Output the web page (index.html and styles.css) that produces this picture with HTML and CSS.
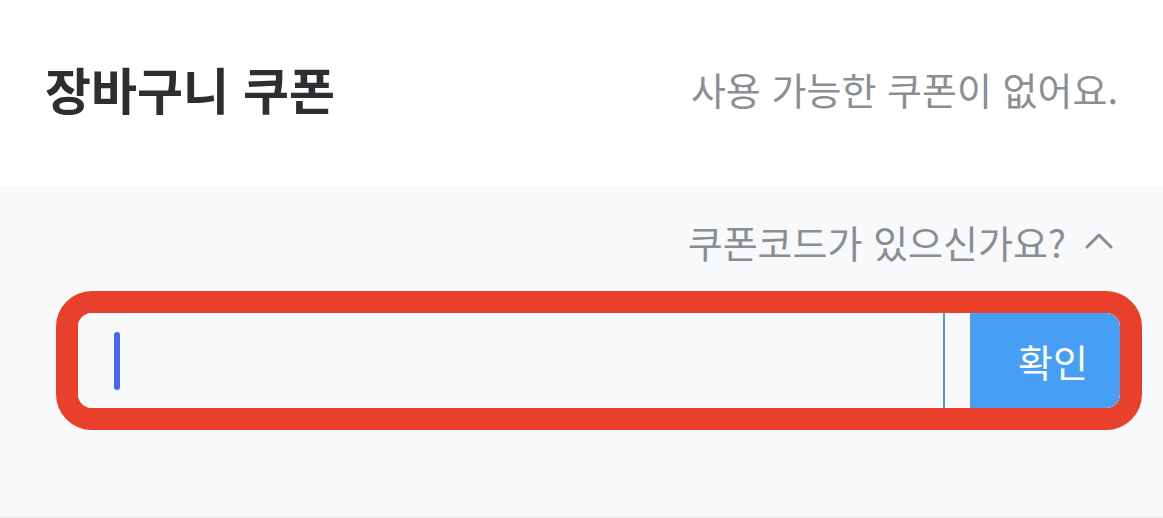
FILE: index.html
```html
<!DOCTYPE html>
<html lang="ko">
<head>
    <meta charset="UTF-8">
    <meta name="viewport" content="width=device-width, initial-scale=1.0">
    <title>장바구니 쿠폰</title>
    <link rel="stylesheet" href="styles.css">
</head>
<body>
    <div class="coupon-header">
        <h2 class="coupon-title">장바구니 쿠폰</h2>
        <span class="coupon-empty">사용 가능한 쿠폰이 없어요.</span>
    </div>

    <div class="coupon-code">
        <div class="code-toggle">
            <span>쿠폰코드가 있으신가요?</span>
            <svg class="chevron" width="28" height="17" viewBox="0 0 28 17">
                <path d="M2 15 L14 3 L26 15" fill="none" stroke="#8a8d92" stroke-width="3" stroke-linecap="round" stroke-linejoin="round"/>
            </svg>
        </div>

        <!-- 강조 표시 -->
        <div class="highlight">
            <div class="code-form">
                <div class="code-input">
                    <span class="caret"></span>
                </div>
                <div class="code-spacer"></div>
                <button class="code-submit">확인</button>
            </div>
        </div>
    </div>
</body>
</html>
```

FILE: styles.css
```css
* {
    box-sizing: border-box;
    font-family: "Noto Sans CJK KR", "Noto Sans", sans-serif;
}

body {
    margin: 0;
    background-color: #ffffff;
}

.coupon-header {
    height: 186px;
    padding: 0 45px 10px;
    display: flex;
    justify-content: space-between;
    align-items: center;
}

.coupon-title {
    margin: 0;
    font-size: 50px;
    font-weight: 700;
    color: #2c2e31;
}

.coupon-empty {
    font-size: 38px;
    color: #8b8e93;
}

.coupon-code {
    background-color: #f8f9fa;
    padding: 26px 0 86px;
    border-bottom: 2px solid #eff0f2;
}

.code-toggle {
    height: 58px;
    padding-right: 50px;
    display: flex;
    justify-content: flex-end;
    align-items: center;
    gap: 19px;
    font-size: 38px;
    color: #8a8d92;
}

.chevron {
    margin-top: -2px;
}

.highlight {
    margin: 21px 21px 0 56px;
    border: 22px solid #e8402a;
    border-radius: 36px;
}

.code-form {
    height: 95px;
    display: flex;
    border-radius: 14px;
    overflow: hidden;
    background-color: #f8f9fb;
}

.code-input {
    flex: 1;
    display: flex;
    align-items: center;
    padding-left: 36px;
    border-right: 2px solid #479ef5;
}

.caret {
    width: 6px;
    height: 58px;
    border-radius: 3px;
    background-color: #4a67ee;
}

.code-spacer {
    width: 25px;
}

.code-submit {
    width: 150px;
    padding: 0 0 0 16px;
    border: none;
    background-color: #479ef5;
    color: #ffffff;
    font-size: 38px;
    cursor: pointer;
}
```
